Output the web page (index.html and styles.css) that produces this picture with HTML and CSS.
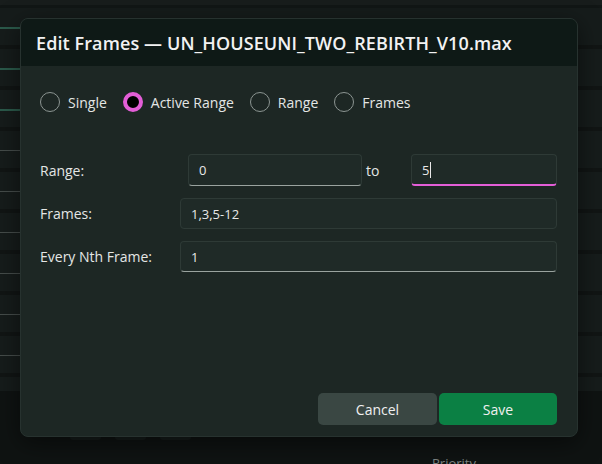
FILE: index.html
```html
<!DOCTYPE html>
<html>
<head>
<meta charset="utf-8">
<link rel="stylesheet" href="styles.css">
</head>
<body>
<div class="app">
  <div class="topbar"></div>
  <div class="list">
    <div class="row"><div class="cell"><div class="mark green"></div></div></div>
    <div class="row"><div class="cell"><div class="mark green"></div></div></div>
    <div class="row"><div class="cell"><div class="mark green"></div></div></div>
    <div class="row"><div class="cell"><div class="mark"></div></div></div>
    <div class="row"><div class="cell"><div class="mark"></div></div></div>
    <div class="row"><div class="cell"><div class="mark"></div></div></div>
    <div class="row"><div class="cell"><div class="mark"></div></div></div>
    <div class="row"><div class="cell"><div class="mark"></div></div></div>
    <div class="row"><div class="cell"><div class="mark"></div></div></div>
    <div class="row last"></div>
  </div>
  <div class="footer">
    <div class="pills"><span class="pill"></span><span class="pill"></span><span class="pill"></span></div>
    <div class="foot-text">Priority</div>
  </div>
</div>

<div class="dialog">
  <div class="dlg-head">Edit Frames — UN_HOUSEUNI_TWO_REBIRTH_V10.max</div>
  <div class="dlg-body">
    <div class="radios">
      <label class="radio"><span class="dot"></span>Single</label>
      <label class="radio"><span class="dot on"></span>Active Range</label>
      <label class="radio"><span class="dot"></span>Range</label>
      <label class="radio"><span class="dot"></span>Frames</label>
    </div>
    <div class="form">
      <div class="frow">
        <div class="flabel wide">Range:</div>
        <div class="field w174 underline">0</div>
        <div class="to">to</div>
        <div class="field grow focus">5<span class="caret"></span></div>
      </div>
      <div class="frow">
        <div class="flabel">Frames:</div>
        <div class="field grow">1,3,5-12</div>
      </div>
      <div class="frow">
        <div class="flabel">Every Nth Frame:</div>
        <div class="field grow underline">1</div>
      </div>
    </div>
    <div class="actions">
      <button class="btn cancel">Cancel</button>
      <button class="btn save">Save</button>
    </div>
  </div>
</div>
</body>
</html>
```
FILE: styles.css
```css
* { box-sizing: border-box; }
html, body { margin: 0; padding: 0; }
body {
  width: 602px;
  height: 464px;
  overflow: hidden;
  background: #0f1312;
  font-family: "Open Sans", "Noto Sans", sans-serif;
  position: relative;
}
.app { display: flex; flex-direction: column; }
.topbar {
  height: 8px;
  background: #181d1c;
  border-bottom: 3px solid #111615;
  border-top: 3px solid #181d1c;
}
.list { display: flex; flex-direction: column; }
.row {
  height: 41px;
  background: #161c1b;
  border-bottom: 4px solid #111514;
  display: flex;
}
.row.last { height: 14px; border-bottom: none; }
.cell { width: 40px; padding-top: 19px; }
.mark { height: 1px; background: #454c4a; }
.mark.green { height: 2px; background: #2b5a4b; }
.footer { position: relative; height: 73px; }
.pills { display: flex; gap: 14px; padding: 45px 0 0 70px; }
.pill { width: 31px; height: 4px; background: #161c1b; border-radius: 0 0 3px 3px; }
.foot-text {
  position: absolute; left: 432px; top: 63px;
  font-size: 13px; color: #7d8482;
}

.dialog {
  position: absolute;
  left: 20px; top: 18px;
  width: 558px; height: 419px;
  background: #1d2724;
  border: 1px solid #27322f;
  border-radius: 8px;
  overflow: hidden;
  display: flex;
  flex-direction: column;
  box-shadow: 0 6px 24px rgba(0,0,0,0.5);
}
.dlg-head {
  height: 47px;
  background: #0e1916;
  color: #f2f2f2;
  font-size: 18px;
  font-weight: 600;
  letter-spacing: 0.1px;
  padding: 0 0 0 15px;
  display: flex;
  align-items: center;
  white-space: nowrap;
}
.dlg-body {
  flex: 1;
  display: flex;
  flex-direction: column;
  padding: 26px 20px 11px 19px;
}
.radios { display: flex; align-items: center; gap: 0; }
.radio {
  display: flex; align-items: center;
  font-size: 14px; color: #e4e6e5;
  margin-right: 16px;
  height: 20px;
}
.dot {
  width: 20px; height: 20px;
  border: 1.5px solid #8c9592;
  border-radius: 50%;
  margin-right: 8px;
  flex: none;
}
.dot.on {
  border: 4px solid #e35ed7;
  background: #000;
}
.form { display: flex; flex-direction: column; gap: 12px; margin-top: 42px; }
.frow { display: flex; align-items: center; height: 32px; }
.frow:nth-child(2), .frow:nth-child(3) { height: 31px; }
.flabel { width: 140px; font-size: 14px; color: #e4e6e5; flex: none; }
.flabel.wide { width: 148px; }
.field {
  height: 100%;
  background: #1f2a27;
  border: 1px solid #2e3a36;
  border-radius: 4px;
  font-size: 13px;
  color: #e8e8e8;
  display: flex; align-items: center;
  padding-left: 10px;
}
.w174 { width: 174px; flex: none; }
.grow { flex: 1; }
.underline { border-bottom: 1px solid #9aa39f; }
.focus { border-bottom: 2px solid #e35ed7; padding-top: 1px; }
.caret { display: inline-block; width: 1px; height: 16px; background: #e8e8e8; margin-left: 1px; }
.to { width: 49px; font-size: 14px; color: #e4e6e5; padding-left: 4px; }
.actions {
  margin-top: auto;
  display: flex; justify-content: flex-end; gap: 2px;
}
.btn {
  width: 119px; height: 32px;
  border: none; border-radius: 5px;
  font-family: "Open Sans", "Noto Sans", sans-serif;
  font-size: 14px;
  color: #f0f0f0;
}
.cancel { background: #3a4743; }
.save { background: #0b8044; width: 118px; }
```
